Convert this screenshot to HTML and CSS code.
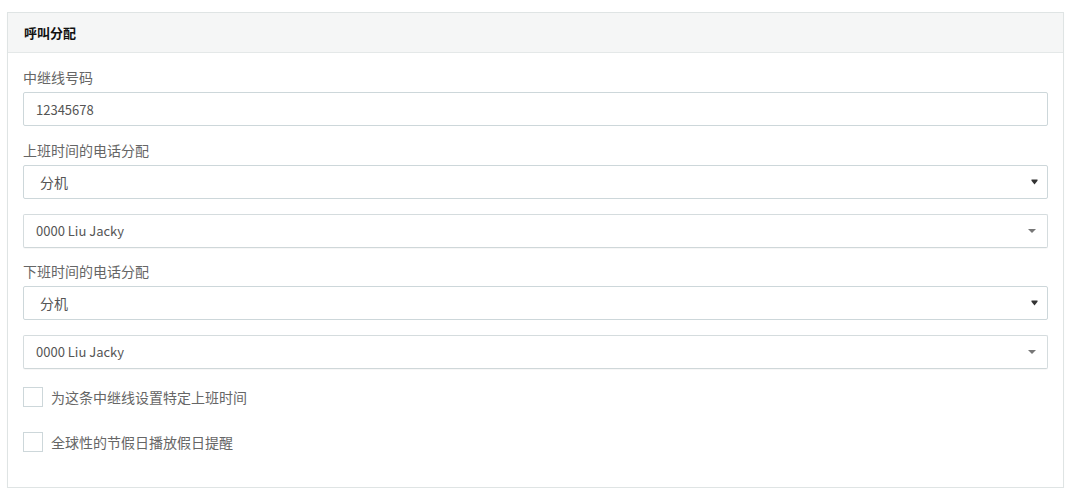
FILE: index.html
```html
<!DOCTYPE html>
<html lang="zh-CN">
<head>
<meta charset="utf-8">
<title>呼叫分配</title>
<link rel="stylesheet" href="styles.css">
</head>
<body>
<div class="panel">
  <div class="panel-heading">呼叫分配</div>
  <div class="panel-body">
    <div class="group">
      <div class="label">中继线号码</div>
      <div class="input">12345678</div>
    </div>
    <div class="group">
      <div class="label">上班时间的电话分配</div>
      <div class="select native"><span>分机</span><svg class="native-arrow" width="7" height="6" viewBox="0 0 7 6"><path d="M0.5 0.5h6v1.2L3.5 5.5 0.5 1.7z" fill="#333"/></svg></div>
      <div class="select s2"><span>0000 Liu Jacky</span><span class="caret"></span></div>
    </div>
    <div class="group">
      <div class="label">下班时间的电话分配</div>
      <div class="select native"><span>分机</span><svg class="native-arrow" width="7" height="6" viewBox="0 0 7 6"><path d="M0.5 0.5h6v1.2L3.5 5.5 0.5 1.7z" fill="#333"/></svg></div>
      <div class="select s2"><span>0000 Liu Jacky</span><span class="caret"></span></div>
    </div>
    <label class="check first"><span class="box"></span><span>为这条中继线设置特定上班时间</span></label>
    <label class="check"><span class="box"></span><span>全球性的节假日播放假日提醒</span></label>
  </div>
</div>
</body>
</html>
```
FILE: styles.css
```css
html, body {
  margin: 0;
  padding: 0;
  background: #ffffff;
}
body {
  padding: 12px 12px 0 7px;
  font-family: "Noto Sans CJK SC", "Noto Sans", sans-serif;
  font-size: 14px;
  color: #666;
}
.panel {
  width: 1055px;
  border: 1px solid #dfe4e4;
  box-shadow: 0 1px 1px rgba(0,0,0,0.04);
  background: #fff;
}
.panel-heading {
  height: 39px;
  line-height: 39px;
  padding: 0 16px;
  background: #f5f6f6;
  border-bottom: 1px solid #e4e8e8;
  font-weight: bold;
  font-size: 13px;
  color: #111;
}
.panel-body {
  padding: 14px 15px 35px 15px;
}
.group {
  display: flex;
  flex-direction: column;
}
.label {
  line-height: 20px;
  height: 20px;
  margin-bottom: 5px;
  color: #666;
}
.input, .select {
  box-sizing: border-box;
  height: 34px;
  border: 1px solid #cdd7da;
  border-radius: 2px;
  background: #fff;
  display: flex;
  align-items: center;
  color: #555;
}
.input {
  padding: 0 12px;
  font-size: 13px;
  margin-bottom: 14px;
}
.select.native {
  padding: 0 9px 0 16px;
  justify-content: space-between;
  margin-bottom: 15px;
}
.select.s2 {
  padding: 0 11px 1px 12px;
  justify-content: space-between;
  font-size: 13px;
  border-color: #d5dcde;
  border-bottom-color: #cfd7d9;
  box-shadow: 0 1px 0 rgba(0,0,0,0.03);
  margin-bottom: 13px;
}
.group:nth-of-type(3) .select.s2 {
  margin-bottom: 0;
}
.native-arrow {
  display: block;
}
.caret {
  width: 0;
  height: 0;
  border-left: 4px solid transparent;
  border-right: 4px solid transparent;
  border-top: 4px solid #777;
}
.check {
  display: flex;
  align-items: center;
  gap: 8px;
  height: 20px;
  margin-top: 25px;
  color: #666;
}
.check.first {
  margin-top: 18px;
}
.box {
  box-sizing: border-box;
  width: 20px;
  height: 20px;
  border: 1px solid #cdd7da;
  background: #fff;
}
```
